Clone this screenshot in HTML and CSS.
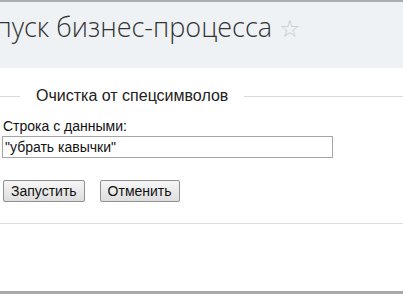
FILE: index.html
```html
<!DOCTYPE html>
<html lang="ru">
  <head>
    <meta charset="UTF-8" />
    <title>Запуск бизнес-процесса</title>
    <link rel="stylesheet" href="styles.css">
  </head>
  <body>
    <div class="page">
      <div class="header">
        <h1 class="title">Запуск бизнес-процесса <span class="star">☆</span></h1>
      </div>

      <div class="content">
        <fieldset class="group">
          <legend>Очистка от спецсимволов</legend>
        </fieldset>

        <div class="field">
          <label for="str">Строка с данными:</label>
          <input id="str" type="text" value="&quot;убрать кавычки&quot;" />
        </div>

        <div class="buttons">
          <button class="btn">Запустить</button>
          <button class="btn">Отменить</button>
        </div>
      </div>
    </div>
  </body>
</html>
```

FILE: styles.css
```css
html,
body {
  margin: 0;
  padding: 0;
  background: white;
}

.page {
  height: 294px;
  border-top: 2px solid #a9adb0;
  border-bottom: 3px solid #a9a9a9;
  box-sizing: border-box;
  display: flex;
  flex-direction: column;
  font-family: "Liberation Sans", Arial, sans-serif;
  font-size: 13px;
  color: #000;
}

.header {
  background: #eef2f4;
  height: 66px;
  overflow: hidden;
}

.title {
  margin: 6px 0 0 -34px;
  font-family: "Open Sans", sans-serif;
  font-weight: 300;
  font-size: 27px;
  color: #333;
  white-space: nowrap;
}

.star {
  color: #c3c8cc;
  font-size: 24px;
  font-family: "DejaVu Sans", sans-serif;
}

.content {
  padding-top: 13px;
  border-bottom: 1px solid #dcdcdc;
  height: 142px;
}

.group {
  margin: 0;
  padding: 0;
  border: none;
  border-top: 1px solid #d9d9d9;
  margin-top: 6px;
}

.group legend {
  margin-left: 20px;
  padding: 0 16px;
  font-size: 16px;
  color: #222;
}

.field {
  margin-top: 13px;
  padding-left: 2px;
}

.field label {
  display: block;
  padding-left: 1px;
  font-size: 14px;
  color: #111;
}

.field input {
  width: 331px;
  height: 22px;
  box-sizing: border-box;
  margin-top: 2px;
  padding: 0 2px;
  border: 1px solid #a5a5a5;
  font-family: "Liberation Sans", Arial, sans-serif;
  font-size: 14px;
  color: #111;
}

.buttons {
  display: flex;
  gap: 15px;
  margin-top: 22px;
  padding-left: 3px;
}

.btn {
  height: 22px;
  padding: 0 7px;
  border: 1px solid #8e8f8f;
  border-radius: 2px;
  background: linear-gradient(#f6f6f6, #dedede);
  font-family: "Liberation Sans", Arial, sans-serif;
  font-size: 14px;
  color: #111;
}
```
